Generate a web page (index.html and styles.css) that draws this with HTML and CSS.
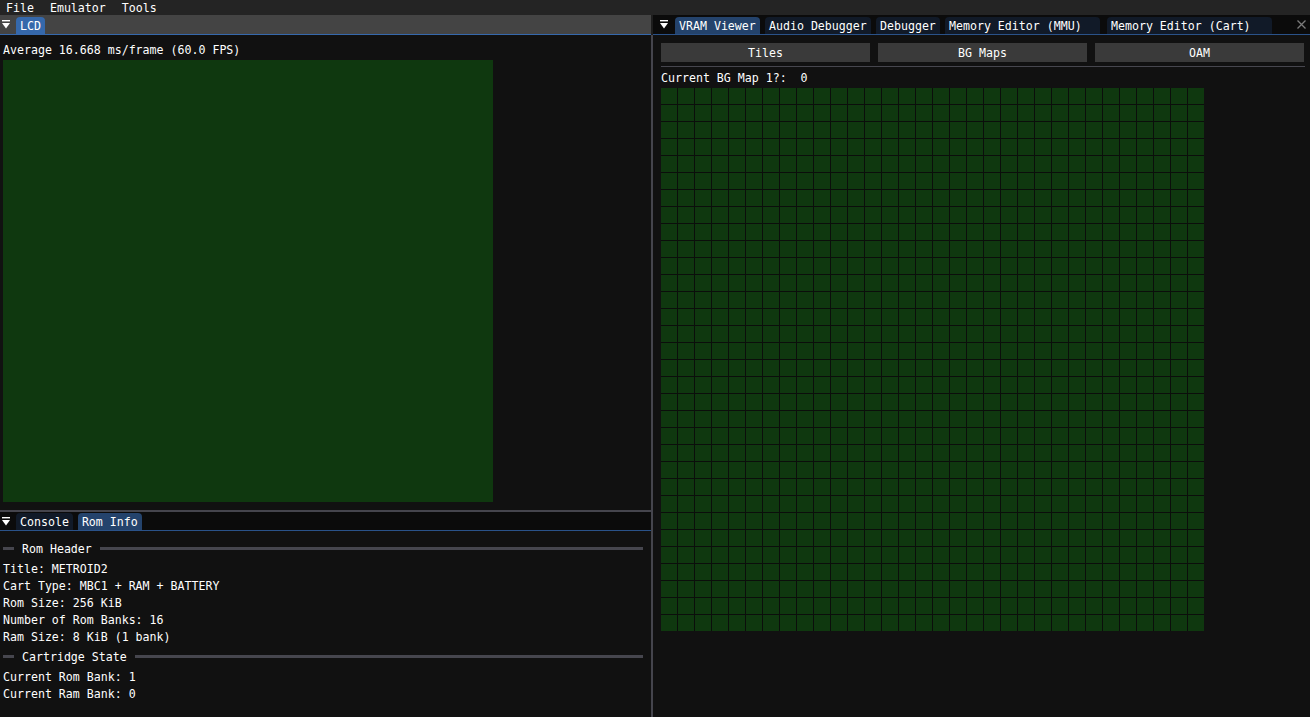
FILE: index.html
```html
<!DOCTYPE html>
<html lang="en">
<head>
<meta charset="utf-8">
<title>Emulator</title>
<link rel="stylesheet" href="styles.css">
</head>
<body>
<div class="app">
  <nav class="menubar">
    <span class="menu-item">File</span>
    <span class="menu-item">Emulator</span>
    <span class="menu-item">Tools</span>
  </nav>
  <div class="dock">
    <div class="col-left">
      <section class="win win-lcd">
        <div class="tabbar tabbar-grey">
          <span class="wmenu wmenu-left"><svg width="8" height="9" viewBox="0 0 8 9"><rect x="0" y="0" width="8" height="1.4" fill="#fff"/><polygon points="0,3 8,3 4,8.6" fill="#fff"/></svg></span>
          <span class="tab tab-focused">LCD</span>
        </div>
        <div class="win-body body-left">
          <p class="text">Average 16.668 ms/frame (60.0 FPS)</p>
          <div class="lcd-screen"></div>
        </div>
      </section>
      <div class="hsplit"></div>
      <section class="win win-rom">
        <div class="tabbar tabbar-dark tabbar-short">
          <span class="wmenu wmenu-left"><svg width="8" height="9" viewBox="0 0 8 9"><rect x="0" y="0" width="8" height="1.4" fill="#fff"/><polygon points="0,3 8,3 4,8.6" fill="#fff"/></svg></span>
          <span class="tab tab-idle">Console</span>
          <span class="tab tab-active">Rom Info</span>
        </div>
        <div class="win-body body-left body-rom">
          <div class="sep-text"><span class="sep-line sep-line-start"></span><span class="sep-label">Rom Header</span><span class="sep-line sep-line-fill"></span></div>
          <p class="text">Title: METROID2</p>
          <p class="text">Cart Type: MBC1 + RAM + BATTERY</p>
          <p class="text">Rom Size: 256 KiB</p>
          <p class="text">Number of Rom Banks: 16</p>
          <p class="text">Ram Size: 8 KiB (1 bank)</p>
          <div class="sep-text"><span class="sep-line sep-line-start"></span><span class="sep-label">Cartridge State</span><span class="sep-line sep-line-fill"></span></div>
          <p class="text">Current Rom Bank: 1</p>
          <p class="text">Current Ram Bank: 0</p>
        </div>
      </section>
    </div>
    <div class="vsplit"></div>
    <section class="win win-vram">
      <div class="tabbar tabbar-dark">
        <span class="wmenu wmenu-right"><svg width="8" height="9" viewBox="0 0 8 9"><rect x="0" y="0" width="8" height="1.4" fill="#fff"/><polygon points="0,3 8,3 4,8.6" fill="#fff"/></svg></span>
        <span class="tab tab-active tab-vram">VRAM Viewer</span>
        <span class="tab tab-idle tab-audio">Audio Debugger</span>
        <span class="tab tab-idle tab-dbg">Debugger</span>
        <span class="tab tab-idle tab-mmu">Memory Editor (MMU)</span>
        <span class="tab tab-idle tab-cart">Memory Editor (Cart)</span>
        <span class="close-btn"><svg width="9" height="9" viewBox="0 0 9 9"><path d="M0.5 0.5 L8.5 8.5 M8.5 0.5 L0.5 8.5" stroke="#7b7b7b" stroke-width="1.3" fill="none"/></svg></span>
      </div>
      <div class="win-body body-vram">
        <div class="btn-row">
          <span class="btn">Tiles</span>
          <span class="btn">BG Maps</span>
          <span class="btn">OAM</span>
        </div>
        <div class="separator"></div>
        <p class="text">Current BG Map 1?:  0</p>
        <div class="tile-map"></div>
      </div>
    </section>
  </div>
</div>
</body>
</html>
```
FILE: styles.css
```css
* { box-sizing: border-box; }

html, body {
  margin: 0;
  padding: 0;
  background: #111111;
}

body {
  width: 1310px;
  height: 717px;
  overflow: hidden;
  font-family: "DejaVu Sans Mono", "Liberation Mono", monospace;
  font-size: 11.6px;
  line-height: 13px;
  color: #ffffff;
}

.app {
  display: flex;
  flex-direction: column;
  height: 717px;
}

.menubar {
  height: 15px;
  flex: none;
  background: #242424;
  display: flex;
  align-items: flex-start;
  padding-left: 6px;
  gap: 16px;
}

.menu-item {
  height: 15px;
  line-height: 17px;
}

.dock {
  flex: 1;
  display: flex;
  min-height: 0;
}

.col-left {
  width: 651px;
  flex: none;
  display: flex;
  flex-direction: column;
}

.vsplit {
  width: 2px;
  flex: none;
  background: linear-gradient(#1e1e1e 0 20px, #45454d 20px);
}

.hsplit {
  height: 2px;
  flex: none;
  background: #45454d;
}

.win {
  display: flex;
  flex-direction: column;
  min-width: 0;
  background: #111111;
}

.win-lcd { height: 495px; flex: none; }
.win-rom { flex: 1; }
.win-vram { flex: 1; }

.tabbar {
  height: 20px;
  flex: none;
  display: flex;
  align-items: flex-end;
  gap: 5px;
  border-bottom: 1px solid #2a5289;
}

.tabbar-grey {
  background: #444444;
  border-bottom-color: #3669ad;
}

.tabbar-dark {
  background: #0b0b0b;
}

.tabbar-short {
  height: 19px;
}

.wmenu {
  width: 8px;
  height: 9px;
  align-self: center;
  display: flex;
  margin-right: 1px;
}

.wmenu svg { display: block; }

.wmenu-left { margin-left: 2px; }
.wmenu-right { margin-left: 7px; margin-right: 2px; }

.tab {
  height: 17px;
  line-height: 19px;
  padding: 0 4px;
  border-radius: 4px 4px 0 0;
  white-space: pre;
  flex: none;
  overflow: hidden;
}

.tab-focused { background: #3568ab; }
.tab-active { background: #24436c; }
.tab-idle { background: #111a28; }

.tab-vram { width: 85px; }
.tab-audio { width: 106px; }
.tab-dbg { width: 64px; }
.tab-mmu { width: 155px; }
.tab-cart { width: 165px; margin-left: 2px; }

.close-btn {
  margin-left: auto;
  margin-right: 4px;
  align-self: center;
  width: 9px;
  height: 9px;
  display: flex;
}

.close-btn svg { display: block; }

.win-body {
  flex: 1;
  display: flex;
  flex-direction: column;
  gap: 4px;
  min-height: 0;
}

.body-left {
  padding: 8px 8px 0 3px;
}

.text {
  margin: 0;
  height: 13px;
  line-height: 15px;
  white-space: pre;
}

.lcd-screen {
  width: 490px;
  height: 442px;
  background: #0f380f;
}

.sep-text {
  height: 19px;
  display: flex;
  align-items: center;
  gap: 8px;
}

.sep-line {
  height: 3px;
  background: #46464e;
}

.sep-line-start {
  width: 11px;
  flex: none;
}

.sep-line-fill {
  flex: 1;
}

.sep-label {
  height: 13px;
  line-height: 15px;
  white-space: pre;
}

.body-vram {
  padding: 8px 6px 0 8px;
}

.btn-row {
  display: flex;
  gap: 8px;
}

.btn {
  flex: 1;
  height: 19px;
  line-height: 21px;
  text-align: center;
  background: #3a3a3a;
  overflow: hidden;
}

.separator {
  height: 1px;
  background: #46464e;
  margin-right: -1px;
}

.tile-map {
  width: 543px;
  height: 543px;
  background-color: #0f380f;
  background-image:
    repeating-linear-gradient(to right, transparent 0 16px, #0b0e0b 16px 17px),
    repeating-linear-gradient(to bottom, transparent 0 16px, #0b0e0b 16px 17px);
}
```
